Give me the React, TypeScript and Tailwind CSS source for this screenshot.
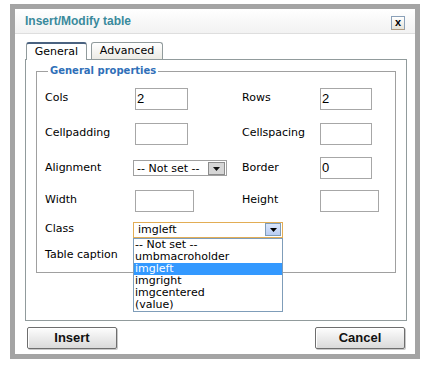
import React from "react";

const Arrow = ({ dark = false }: { dark?: boolean }) => (
  <svg width="7" height="6" viewBox="0 0 7 6">
    <path d="M0 1 L7 1 L3.5 5 Z" fill={dark ? "#000" : "#111"} />
  </svg>
);

const TextBox = ({ value = "", w = "w-[53px]", ml = "ml-[2px]" }: { value?: string; w?: string; ml?: string }) => (
  <div className={`${w} ${ml} h-[22px] border border-[#a7a7a7] bg-white flex items-center pl-[1px] font-['Liberation_Sans'] text-[13px] text-black`}>
    {value}
  </div>
);

const options = ["-- Not set --", "umbmacroholder", "imgleft", "imgright", "imgcentered", "(value)"];

export default function App() {
  return (
    <div className="w-[425px] h-[373px] bg-white pt-[4px] pl-[10px] font-['DejaVu_Sans',sans-serif]">
      <div className="w-[410px] h-[355px] border-[5px] border-[#a4a4a4] bg-white flex flex-col">
        {/* title */}
        <div className="h-[25px] flex items-center justify-between pl-[10px] pr-[10px] border-b border-[#dedede] bg-gradient-to-b from-white to-[#f2f2f2]">
          <span className="font-['Liberation_Sans'] font-bold text-[12px] text-[#3a8a9c]">Insert/Modify table</span>
          <div className="mt-[3px] w-[14px] h-[14px] border border-[#8aa0b8] border-b-[#b09a80] bg-gradient-to-b from-white to-[#e6e3d8] flex items-center justify-center font-['Liberation_Sans'] font-bold text-[11px] leading-none text-black pb-[1px]">
            x
          </div>
        </div>

        {/* body */}
        <div className="flex-1 flex flex-col pt-[8px] pl-[10px] pr-[8px] pb-[5px]">
          <div className="flex items-end gap-[4px] pl-[1px] h-[18px] -mb-[1px] relative z-10">
            <div className="w-[61px] h-[18px] bg-white border-x border-[#919b9c] border-t-2 border-t-[#4a6280] rounded-t-[3px] flex items-center justify-center text-[11px] text-black">
              General
            </div>
            <div className="w-[72px] h-[17px] mb-[1px] bg-gradient-to-b from-white to-[#ecebe5] border border-b-0 border-[#919b9c] rounded-t-[3px] flex items-center justify-center text-[11px] text-black pt-[1px]">
              Advanced
            </div>
          </div>

          <div className="w-[382px] h-[262px] border border-[#919b9c] bg-white px-[10px] pt-[5px]">
            <fieldset className="w-[360px] h-[208px] border border-[#a0a0a0] pl-[8px] pt-[4px]">
              <legend className="ml-[3px] px-[2px] font-bold text-[10px] leading-[12px] text-[#2f6fb8]">General properties</legend>

              <div className="flex flex-col text-[11px] text-black">
                <div className="h-[35px] flex items-center">
                  <span className="w-[88px]">Cols</span>
                  <div className="w-[109px]"><TextBox value="2" /></div>
                  <span className="w-[78px]">Rows</span>
                  <TextBox value="2" w="w-[52px]" ml="ml-0" />
                </div>
                <div className="h-[35px] flex items-center">
                  <span className="w-[88px]">Cellpadding</span>
                  <div className="w-[109px]"><TextBox /></div>
                  <span className="w-[78px]">Cellspacing</span>
                  <TextBox w="w-[52px]" ml="ml-0" />
                </div>
                <div className="h-[34px] flex items-center">
                  <span className="w-[88px]">Alignment</span>
                  <div className="w-[109px]">
                    <div className="w-[94px] h-[16px] border border-[#a0a0a0] bg-white flex items-center justify-between pl-[3px] pr-px">
                      <span className="leading-none">-- Not set --</span>
                      <div className="w-[17px] h-[13px] bg-[#d6d6d6] border border-[#8c8c8c] flex items-end justify-center pb-[2px]">
                        <Arrow />
                      </div>
                    </div>
                  </div>
                  <span className="w-[78px]">Border</span>
                  <TextBox value="0" w="w-[52px]" ml="ml-0" />
                </div>
                <div className="h-[31px] flex items-center">
                  <span className="w-[88px]">Width</span>
                  <div className="w-[109px]"><TextBox w="w-[59px]" /></div>
                  <span className="w-[78px]">Height</span>
                  <TextBox w="w-[59px]" ml="ml-0" />
                </div>
                <div className="h-[27px] flex items-center relative z-20">
                  <span className="w-[88px]">Class</span>
                  <div className="relative">
                    <div className="w-[150px] h-[16px] border border-[#e2ad55] bg-white flex items-center justify-between pl-[4px] pr-px">
                      <span className="leading-none">imgleft</span>
                      <div className="w-[16px] h-[13px] bg-gradient-to-b from-[#dbe6fb] to-[#b9cdf3] border border-[#7f9db9] flex items-end justify-center pb-[2px]">
                        <Arrow dark />
                      </div>
                    </div>
                    <div className="absolute left-0 top-full w-[150px] border border-[#7f9db9] bg-white flex flex-col">
                      {options.map((o) => (
                        <div
                          key={o}
                          className={`h-[12px] leading-[12px] pl-px ${o === "imgleft" ? "bg-[#3399ff] text-white" : "text-black"}`}
                        >
                          {o}
                        </div>
                      ))}
                    </div>
                  </div>
                </div>
                <div className="h-[24px] flex items-center">
                  <span className="w-[88px]">Table caption</span>
                </div>
              </div>
            </fieldset>
          </div>

          <div className="mt-[6px] flex justify-between px-[2px]">
            <button className="w-[90px] h-[22px] border border-[#6e6e6e] rounded-[2px] bg-gradient-to-b from-[#fdfdfd] to-[#dadada] shadow-[inset_1px_1px_0_#fff,1px_1px_0_#c8c8c8] font-['Liberation_Sans'] font-bold text-[13px] text-[#111]">
              Insert
            </button>
            <button className="w-[90px] h-[22px] border border-[#6e6e6e] rounded-[2px] bg-gradient-to-b from-[#fdfdfd] to-[#dadada] shadow-[inset_1px_1px_0_#fff,1px_1px_0_#c8c8c8] font-['Liberation_Sans'] font-bold text-[13px] text-[#111]">
              Cancel
            </button>
          </div>
        </div>
      </div>
    </div>
  );
}
